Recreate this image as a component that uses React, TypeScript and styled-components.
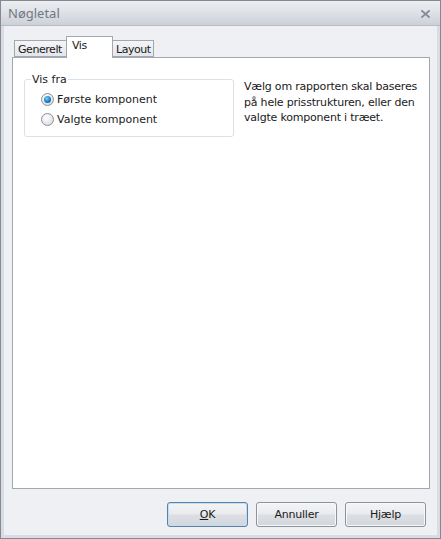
import styled, { createGlobalStyle } from "styled-components";

const GlobalStyle = createGlobalStyle`
    html, body {
        margin: 0;
        padding: 0;
        background: #ffffff;
    }
    body {
        font-family: Tahoma, "DejaVu Sans", "Liberation Sans", sans-serif;
        font-size: 11px;
        color: #000000;
    }
`;

export default function App() {
    return (
        <>
            <GlobalStyle />
            <Window>
                <TitleBar>
                    <Title>Nøgletal</Title>
                    <CloseButton>
                        <svg width="9" height="8" viewBox="0 0 9 8">
                            <path d="M1 1 L8 7 M8 1 L1 7" stroke="#858b93" strokeWidth="1.8" strokeLinecap="square" />
                        </svg>
                    </CloseButton>
                </TitleBar>
                <Body>
                    <TabStrip>
                        <Tab $width={53}>Generelt</Tab>
                        <Tab $active $width={47}>Vis</Tab>
                        <Tab $width={42}>Layout</Tab>
                    </TabStrip>
                    <Panel>
                        <GroupBox>
                            <Legend>Vis fra</Legend>
                            <RadioRow>
                                <Radio $checked />
                                <span>Første komponent</span>
                            </RadioRow>
                            <RadioRow>
                                <Radio />
                                <span>Valgte komponent</span>
                            </RadioRow>
                        </GroupBox>
                        <Description>
                            Vælg om rapporten skal baseres på hele prisstrukturen, eller den valgte komponent i træet.
                        </Description>
                    </Panel>
                    <ButtonRow>
                        <Button $default>
                            <u>O</u>K
                        </Button>
                        <Button>Annuller</Button>
                        <Button>Hjælp</Button>
                    </ButtonRow>
                </Body>
            </Window>
        </>
    );
}

const Window = styled.div`
    width: 441px;
    height: 539px;
    box-sizing: border-box;
    display: flex;
    flex-direction: column;
    border: 1px solid #848a92;
    background: #eef0f3;
`;

const TitleBar = styled.div`
    height: 24px;
    flex: none;
    display: flex;
    align-items: center;
    justify-content: space-between;
    padding: 0 10px 0 7px;
    background: linear-gradient(to bottom, #eceef1 0%, #dfe2e7 45%, #ccd1d8 100%);
    border-bottom: 1px solid #b7bcc4;
`;

const Title = styled.div`
    font-family: "Noto Sans", "DejaVu Sans", sans-serif;
    font-size: 13px;
    color: #737880;
`;

const CloseButton = styled.div`
    display: flex;
    align-items: center;
    margin-top: 1px;
`;

const Body = styled.div`
    flex: 1;
    display: flex;
    flex-direction: column;
    padding: 10px 7px 0 8px;
    border-left: 3px solid #d9dde3;
    border-right: 3px solid #d9dde3;
    border-bottom: 3px solid #d9dde3;
`;

const TabStrip = styled.div`
    display: flex;
    align-items: flex-end;
    padding-left: 2px;
    height: 21px;
    position: relative;
    z-index: 1;
`;

const Tab = styled.div<{ $active?: boolean; $width: number }>`
    box-sizing: border-box;
    width: ${({ $width }) => $width}px;
    height: ${({ $active }) => ($active ? "22px" : "17px")};
    margin-bottom: ${({ $active }) => ($active ? "-1px" : "0")};
    padding: ${({ $active }) => ($active ? "2px 0 0 5px" : "2px 0 0 3px")};
    margin-left: ${({ $active }) => ($active ? "-1px" : "0")};
    margin-right: ${({ $active }) => ($active ? "-1px" : "0")};
    background: ${({ $active }) => ($active ? "#ffffff" : "linear-gradient(to bottom, #f4f5f7, #e3e6ea)")};
    border: 1px solid #a3a8ae;
    border-bottom: ${({ $active }) => ($active ? "none" : "1px solid #a3a8ae")};
    font-family: "DejaVu Sans", sans-serif;
    font-size: 11px;
    line-height: 13px;
    color: #1a1a1a;
    letter-spacing: -0.45px;
    white-space: nowrap;
`;

const Panel = styled.div`
    box-sizing: border-box;
    height: 432px;
    display: flex;
    align-items: flex-start;
    gap: 10px;
    padding: 22px 0 0 11px;
    background: #ffffff;
    border: 1px solid #a3a8ae;
`;

const GroupBox = styled.fieldset`
    box-sizing: border-box;
    width: 211px;
    height: 64px;
    margin: -7px 0 0 0;
    padding: 5px 0 0 16px;
    border: 1px solid #dbe1e6;
    border-radius: 3px;
    display: flex;
    flex-direction: column;
    gap: 4px;
`;

const Legend = styled.legend`
    padding: 0 1px;
    margin-left: -10px;
    font-family: "DejaVu Sans", sans-serif;
    font-size: 11px;
    color: #1a1a1a;
`;

const RadioRow = styled.div`
    display: flex;
    align-items: center;
    gap: 3px;
    height: 16px;
    font-family: "DejaVu Sans", sans-serif;
    font-size: 11px;
    color: #1a1a1a;
`;

const Radio = styled.span<{ $checked?: boolean }>`
    box-sizing: border-box;
    width: 13px;
    height: 13px;
    border-radius: 50%;
    border: 1px solid #8b9299;
    background: radial-gradient(circle at 40% 35%, #ffffff 0%, #e4e6e9 60%, #c9cdd2 100%);
    display: flex;
    align-items: center;
    justify-content: center;

    &::after {
        content: "";
        display: ${({ $checked }) => ($checked ? "block" : "none")};
        width: 7px;
        height: 7px;
        border-radius: 50%;
        background: radial-gradient(circle at 40% 35%, #7fd0f5 0%, #1b7fc4 55%, #0b4c86 100%);
    }
`;

const Description = styled.div`
    width: 186px;
    margin-top: -1px;
    font-family: "DejaVu Sans", sans-serif;
    font-size: 11px;
    line-height: 15.5px;
    color: #1a1a1a;
    letter-spacing: -0.2px;
`;

const ButtonRow = styled.div`
    display: flex;
    justify-content: flex-end;
    gap: 8px;
    padding: 13px 4px 0 0;
`;

const Button = styled.button<{ $default?: boolean }>`
    box-sizing: border-box;
    width: 81px;
    height: 25px;
    padding: 0;
    border: 1px solid ${({ $default }) => ($default ? "#5f7fa3" : "#8e9399")};
    border-radius: 3px;
    background: linear-gradient(to bottom, #f3f4f6 0%, #e9ebee 48%, #dcdfe3 52%, #d3d7dc 100%);
    box-shadow: inset 0 0 0 1px ${({ $default }) => ($default ? "#bfe0f4" : "#f7f8f9")};
    font-family: "DejaVu Sans", sans-serif;
    font-size: 11px;
    color: #1a1a1a;
    letter-spacing: -0.2px;
`;
